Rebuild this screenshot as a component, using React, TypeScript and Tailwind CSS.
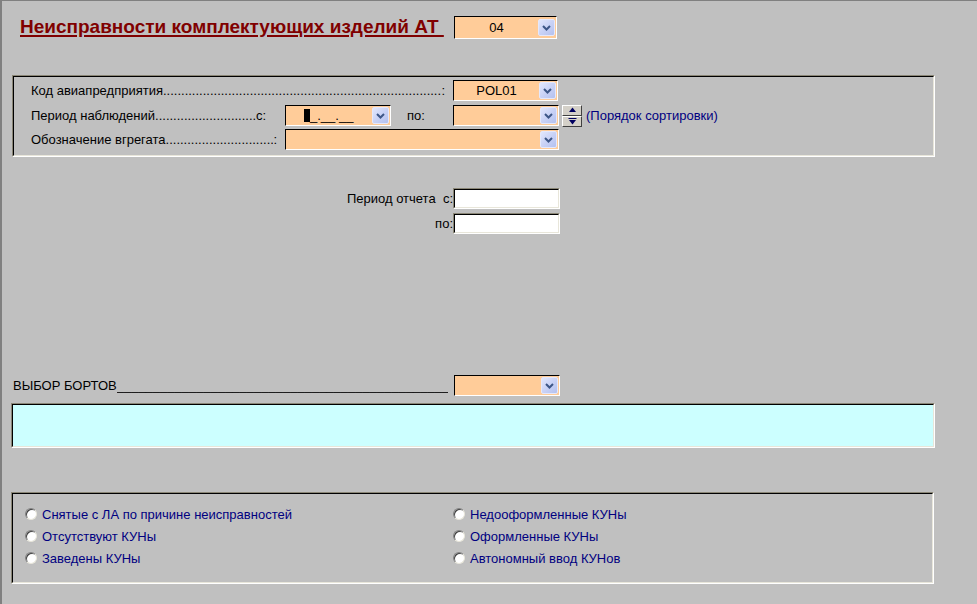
import React from "react";

const Chevron = () => (
  <div className="w-[17px] h-[17px] flex items-center justify-center rounded-[2px] border border-[#e4e8fc] bg-gradient-to-br from-[#e2e7fd] via-[#c9d2f6] to-[#b4c1ef]">
    <svg width="9" height="6" viewBox="0 0 9 6">
      <path d="M1 1 L4.5 4.5 L8 1" stroke="#3d5687" strokeWidth="2" fill="none" />
    </svg>
  </div>
);

function Select({ cls, children, center = true }: { cls: string; children?: React.ReactNode; center?: boolean }) {
  return (
    <div className={`flex items-center bg-[#ffcc99] border-t border-l border-t-black border-l-black border-b border-r border-b-white border-r-white pr-[1px] ${cls}`}>
      <div className={`flex-1 min-w-0 flex items-center text-[13px] text-black ${center ? "justify-center" : ""}`}>{children}</div>
      <Chevron />
    </div>
  );
}

function TextInput({ cls }: { cls: string }) {
  return (
    <div className={`border-t border-l border-t-[#8a8676] border-l-[#8a8676] border-b border-r border-b-white border-r-white ${cls}`}>
      <div className="w-full h-full bg-white border-t border-l border-t-black border-l-black border-b border-r border-b-[#e8e6da] border-r-[#e8e6da]" />
    </div>
  );
}

function Inset({ cls, inner, children }: { cls: string; inner: string; children?: React.ReactNode }) {
  return (
    <div className={`border-t border-l border-t-[#8a8676] border-l-[#8a8676] border-b border-r border-b-white border-r-white ${cls}`}>
      <div className={`w-full h-full border-t border-l border-t-black border-l-black border-b border-r border-b-[#e8e6da] border-r-[#e8e6da] ${inner}`}>{children}</div>
    </div>
  );
}

const DOTS = ".".repeat(200);
const UNDERS = "_".repeat(120);

function Radio({ label }: { label: string }) {
  return (
    <div className="flex items-center h-[22px]">
      <div className="w-[12px] h-[12px] rounded-full bg-white border border-t-[#808080] border-l-[#808080] border-b-[#e8e6da] border-r-[#e8e6da] shadow-[inset_1px_1px_0_#404040] -mt-[3px]" />
      <span className="ml-[5px] text-[13px] text-[#000080] whitespace-nowrap">{label}</span>
    </div>
  );
}

const Spinner = () => (
  <div className="flex flex-col w-[20px] h-[22px]">
    <div className="h-[11px] bg-[#d4d0c8] border-t border-l border-t-white border-l-white border-b border-r border-b-[#404040] border-r-[#404040] flex items-center justify-center">
      <svg width="9" height="7" viewBox="0 0 9 7">
        <path d="M4.5 0.5 L8 5 L1 5 Z" fill="#000060" />
      </svg>
    </div>
    <div className="h-[11px] bg-[#d4d0c8] border-t border-l border-t-white border-l-white border-b border-r border-b-[#404040] border-r-[#404040] flex items-center justify-center">
      <svg width="9" height="7" viewBox="0 0 9 7">
        <rect x="0.5" y="0" width="8" height="1" fill="#000060" />
        <path d="M1 2 L8 2 L4.5 6.5 Z" fill="#000060" />
      </svg>
    </div>
  </div>
);

export default function App() {
  return (
    <div className="w-[977px] h-[604px] overflow-hidden bg-[#c0c0c0] border-t border-l-2 border-[#808080] font-['Liberation_Sans',Arial,sans-serif] text-black">
      {/* Title row */}
      <div className="flex items-center mt-[15px] h-[23px]">
        <div className="ml-[18px] w-[434px] whitespace-nowrap">
          <span className="text-[19px] font-bold text-[#800000] underline decoration-[2px] underline-offset-[2px]">
            Неисправности комплектующих изделий АТ&nbsp;
          </span>
        </div>
        <Select cls="w-[103px] h-[23px]">04</Select>
      </div>

      {/* Box 1 */}
      <Inset cls="ml-[10px] mt-[36px] w-[923px] h-[82px]" inner="pt-[3px] pl-[17px]">
        <div className="flex items-center h-[21px]">
          <div className="w-[422px] pr-[8px] flex text-[13px] whitespace-nowrap">
            <span>Код авиапредприятия</span>
            <span className="flex-1 min-w-0 overflow-hidden">{DOTS}</span>
            <span>:</span>
          </div>
          <Select cls="w-[105px] h-[21px]">POL01</Select>
        </div>
        <div className="flex items-center h-[21px] mt-[4px]">
          <div className="w-[254px] pr-[19px] flex text-[13px] whitespace-nowrap">
            <span>Период наблюдений</span>
            <span className="flex-1 min-w-0 overflow-hidden">{DOTS}</span>
            <span>с:</span>
          </div>
          <Select cls="w-[106px] h-[21px]" center={false}>
            <span className="ml-[18px] inline-block w-[6px] h-[13px] bg-black" />
            <span className="text-[13px]">_.__.__</span>
          </Select>
          <div className="ml-[16px] w-[46px] text-[13px]">по:</div>
          <Select cls="w-[106px] h-[21px]" />
          <div className="ml-[3px]">
            <Spinner />
          </div>
          <span className="ml-[4px] text-[13px] text-[#000080] whitespace-nowrap">(Порядок сортировки)</span>
        </div>
        <div className="flex items-center h-[21px] mt-[3px]">
          <div className="w-[254px] pr-[8px] flex text-[13px] whitespace-nowrap">
            <span>Обозначение вгрегата</span>
            <span className="flex-1 min-w-0 overflow-hidden">{DOTS}</span>
            <span>:</span>
          </div>
          <Select cls="w-[274px] h-[21px]" />
        </div>
      </Inset>

      {/* Report period */}
      <div className="mt-[31px] flex items-center h-[21px]">
        <div className="w-[451px] text-right text-[13px] whitespace-pre">Период отчета  с:</div>
        <TextInput cls="w-[107px] h-[21px]" />
      </div>
      <div className="mt-[4px] flex items-center h-[21px]">
        <div className="w-[451px] text-right text-[13px]">по:</div>
        <TextInput cls="w-[107px] h-[21px]" />
      </div>

      {/* Bort selection */}
      <div className="mt-[141px] flex items-center h-[21px]">
        <div className="ml-[11px] w-[441px] pr-[6px] flex text-[13px] whitespace-nowrap">
          <span>ВЫБОР БОРТОВ</span>
          <span className="flex-1 min-w-0 overflow-hidden">{UNDERS}</span>
        </div>
        <Select cls="w-[106px] h-[21px]" />
      </div>
      <Inset cls="ml-[9px] mt-[7px] w-[924px] h-[45px]" inner="bg-[#ccffff]" />

      {/* Box 2 */}
      <Inset cls="ml-[9px] mt-[44px] w-[923px] h-[92px]" inner="pt-[10px] pl-[12px] flex">
        <div className="w-[428px] flex flex-col">
          <Radio label="Снятые с ЛА по причине неисправностей" />
          <Radio label="Отсутствуют КУНы" />
          <Radio label="Заведены КУНы" />
        </div>
        <div className="flex flex-col">
          <Radio label="Недооформленные КУНы" />
          <Radio label="Оформленные КУНы" />
          <Radio label="Автономный ввод КУНов" />
        </div>
      </Inset>
    </div>
  );
}
